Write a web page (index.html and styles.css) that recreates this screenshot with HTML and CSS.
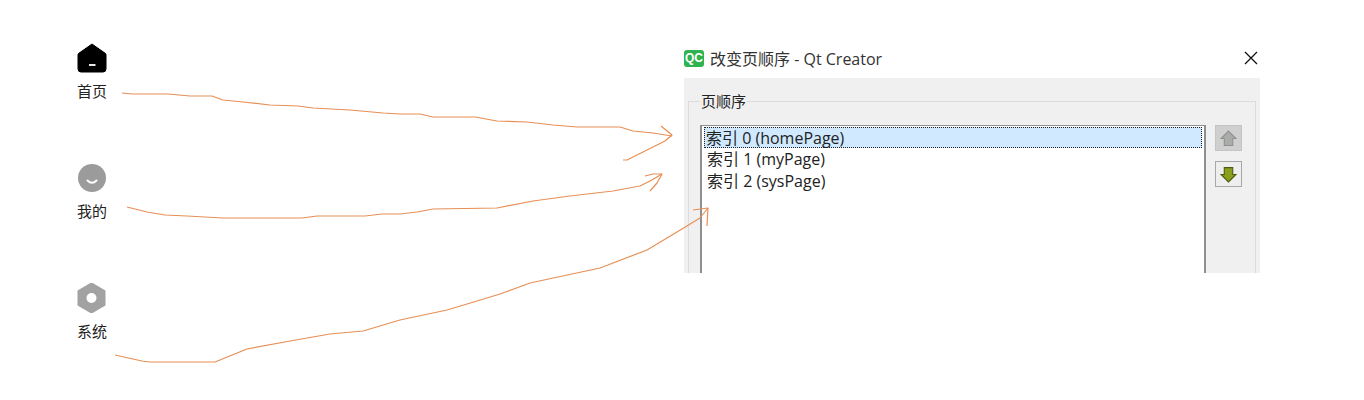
FILE: index.html
```html
<!DOCTYPE html>
<html lang="en">
<head>
  <meta charset="UTF-8" />
  <meta name="viewport" content="width=device-width, initial-scale=1.0" />
  <title>改变页顺序</title>
  <link rel="stylesheet" href="styles.css">
</head>
<body>
  <div class="page">
    <nav class="nav">
      <div class="nav-item">
        <svg class="nav-icon" viewBox="0 0 30 30">
          <path d="M15 1 L28.5 10.5 Q29 11 29 12 V26 Q29 29 26 29 H4 Q1 29 1 26 V12 Q1 11 1.5 10.5 Z" fill="#000" stroke="#000" stroke-linejoin="round" />
          <rect x="12" y="21" width="6.5" height="2" fill="#e8e8e8" />
        </svg>
        <span>首页</span>
      </div>
      <div class="nav-item">
        <svg class="nav-icon" viewBox="0 0 30 30">
          <circle cx="15" cy="15" r="14" fill="#9b9b9b" />
          <path d="M10.5 17.5 Q15 22 19.5 17.5" fill="none" stroke="#fff" stroke-width="2" stroke-linecap="round" />
        </svg>
        <span>我的</span>
      </div>
      <div class="nav-item">
        <svg class="nav-icon" viewBox="0 0 30 30">
          <path d="M14.5 0.5 L27.5 8 V22 L14.5 29.5 L1.5 22 V8 Z" fill="#a2a2a2" stroke="#a2a2a2" stroke-width="2" stroke-linejoin="round" />
          <circle cx="14.5" cy="15" r="5" fill="#fff" />
        </svg>
        <span>系统</span>
      </div>
    </nav>

    <section class="dialog">
      <header class="title-bar">
        <span class="qc-logo">QC</span>
        <span class="title-text">改变页顺序 - Qt Creator</span>
        <svg class="close-icon" viewBox="0 0 14 14">
          <path d="M1 1 L13 13 M13 1 L1 13" stroke="#111" stroke-width="1.3" fill="none" />
        </svg>
      </header>
      <div class="dialog-body">
        <div class="group-box">
          <span class="group-title">页顺序</span>
          <div class="group-content">
            <ul class="page-list">
              <li class="selected">索引 0 (homePage)</li>
              <li>索引 1 (myPage)</li>
              <li>索引 2 (sysPage)</li>
            </ul>
            <div class="move-buttons">
              <button class="move-btn up">
                <svg viewBox="0 0 16 16"><path d="M8 1 L15 8 H12 V14.5 H4 V8 H1 Z" fill="#a9aca9" stroke="#8e918e" /></svg>
              </button>
              <button class="move-btn down">
                <svg viewBox="0 0 16 16"><path d="M4 1.5 H12 V8 H15 L8 15 L1 8 H4 Z" fill="#8a9f1c" stroke="#4c5a12" /></svg>
              </button>
            </div>
          </div>
        </div>
      </div>
    </section>
  </div>

  <!-- hand drawn arrows on top of the screenshot -->
  <svg class="arrows" viewBox="0 0 1364 400">
    <polyline points="122,93 133,94 168,94 190,96 212,96 223,100 243,102 270,105 298,106 313,108 350,110 383,113 400,114 420,114 433,117 475,117 497,121 527,122 553,125 577,127 620,127 633,131 653,133 672,136" />
    <polyline points="661,126 672,135 665,141 627,160 623,160" />
    <polyline points="127,207 147,212 165,215 187,216 223,218 302,218 317,216 365,216 382,214 400,214 417,212 433,209 497,208 533,201 570,196 613,191 640,186 650,181 662,174" />
    <polyline points="645,176 653,174 662,174 657,183 650,191" />
    <polyline points="115,355 142,361 150,362 215,362 247,349 290,341 330,334 363,331 400,320 447,310 477,301 500,294 530,283 600,268 647,250 677,232 700,218 708,208" />
    <polyline points="693,210 708,208 707,226" />
  </svg>
</body>
</html>
```

FILE: styles.css
```css
body {
  margin: 0;
  background-color: #fff;
  color: #222;
  font-family: "Open Sans", "Noto Sans CJK SC", sans-serif;
}

.page {
  display: grid;
  grid-template-columns: 60px 576px;
  column-gap: 562px;
  padding-left: 62px;
  height: 400px;
  overflow: hidden;
}

.nav {
  display: flex;
  flex-direction: column;
  padding-top: 43px;
}

.nav-item {
  display: flex;
  flex-direction: column;
  align-items: center;
  height: 120px;
  font-family: "Noto Sans CJK SC", sans-serif;
  font-size: 15px;
  line-height: 22px;
  color: #222;
}

.nav-icon {
  width: 30px;
  height: 30px;
  margin-bottom: 7px;
}

.dialog {
  padding-top: 40px;
}

.title-bar {
  display: flex;
  align-items: center;
  height: 38px;
  padding-bottom: 2px;
  box-sizing: border-box;
}

.qc-logo {
  width: 20px;
  height: 17px;
  margin-right: 6px;
  border-radius: 3px;
  background-color: #2fb350;
  color: #fff;
  font-family: "Liberation Sans", sans-serif;
  font-size: 12px;
  font-weight: bold;
  line-height: 17px;
  text-align: center;
}

.title-text {
  flex: 1;
  font-size: 16px;
  color: #333;
}

.close-icon {
  width: 14px;
  height: 14px;
  margin-right: 2px;
}

.dialog-body {
  height: 195px;
  padding: 23px 4px 0;
  box-sizing: border-box;
  background-color: #f0f0f0;
  overflow: hidden;
}

.group-box {
  height: 240px;
  border: 1px solid #dcdcdc;
  padding: 23px 13px 0 11px;
}

.group-title {
  position: absolute;
  margin-top: -35px;
  padding: 0 1px;
  background-color: #f0f0f0;
  font-size: 15px;
  line-height: 22px;
}

.group-content {
  display: flex;
  gap: 9px;
}

.page-list {
  flex: 1;
  height: 220px;
  margin: 0;
  padding: 1px 2px 2px;
  box-sizing: border-box;
  list-style: none;
  background-color: #fff;
  border: 1px solid #8f8f8f;
  border-width: 1px 2px;
  font-size: 16px;
  line-height: 22px;
  color: #222;
}

.page-list li {
  padding-left: 3px;
}

.page-list .selected {
  padding-left: 2px;
  height: 21px;
  background-color: #d0e9ff;
  outline: 1px dotted #222;
  outline-offset: -1px;
}

.move-buttons {
  display: flex;
  flex-direction: column;
  gap: 10px;
}

.move-btn {
  display: flex;
  align-items: center;
  justify-content: center;
  width: 27px;
  height: 26px;
  padding: 0;
  border: 1px solid #c4c4c4;
  background-color: #cfcfcf;
}

.move-btn.down {
  background-color: #eee;
  border-color: #a8a8a8;
}

.move-btn svg {
  width: 17px;
  height: 17px;
}

.arrows {
  position: absolute;
  left: 0;
  top: 0;
  width: 1364px;
  height: 400px;
  pointer-events: none;
}

.arrows polyline {
  fill: none;
  stroke: #e78f55;
  stroke-width: 1.2;
  stroke-linejoin: round;
}
```
